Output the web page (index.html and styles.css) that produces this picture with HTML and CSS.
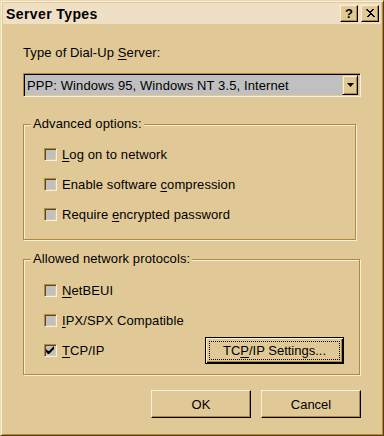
FILE: index.html
```html
<!DOCTYPE html>
<html>
  <head>
    <meta charset="utf-8">
    <title>Server Types</title>
    <link rel="stylesheet" href="styles.css">
  </head>

  <body>
    <div class="window">
      <div class="titlebar">
        <span class="title">Server Types</span>
        <div class="title-buttons">
          <button class="tbtn help">?</button>
          <button class="tbtn close">
            <svg width="10" height="9" viewBox="0 0 10 9">
              <path d="M1 0h2v1h1v1h2v-1h1v-1h2v1h-1v1h-1v1h-1v1h1v1h1v1h1v1h1v1h-2v-1h-1v-1h-2v1h-1v1h-2v-1h1v-1h1v-1h1v-1h-1v-1h-1v-1h-1z" fill="#000"/>
            </svg>
          </button>
        </div>
      </div>

      <div class="content">
        <div class="field-label">Type of Dial-Up <u>S</u>erver:</div>
        <div class="combo">
          <span class="combo-text">PPP: Windows 95, Windows NT 3.5, Internet</span>
          <span class="combo-btn">
            <svg width="7" height="4" viewBox="0 0 7 4"><path d="M0 0h7l-3.5 4z" fill="#000"/></svg>
          </span>
        </div>

        <fieldset class="group group-advanced">
          <legend>Advanced options:</legend>
          <div class="check-row">
            <span class="box"></span>
            <span><u>L</u>og on to network</span>
          </div>
          <div class="check-row">
            <span class="box"></span>
            <span>Enable software <u>c</u>ompression</span>
          </div>
          <div class="check-row">
            <span class="box"></span>
            <span>Require <u>e</u>ncrypted password</span>
          </div>
        </fieldset>

        <fieldset class="group group-protocols">
          <legend>Allowed network protocols:</legend>
          <div class="check-row">
            <span class="box"></span>
            <span><u>N</u>etBEUI</span>
          </div>
          <div class="check-row">
            <span class="box"></span>
            <span><u>I</u>PX/SPX Compatible</span>
          </div>
          <div class="check-row">
            <span class="box">
              <svg width="9" height="9" viewBox="0 0 9 9"><path d="M0 3v3l2 2h1l5-5v-3l-5 5h-1z" fill="#000"/></svg>
            </span>
            <span><u>T</u>CP/IP</span>
            <button class="btn default">TC<u>P</u>/IP Settings...</button>
          </div>
        </fieldset>

        <div class="actions">
          <button class="btn">OK</button>
          <button class="btn">Cancel</button>
        </div>
      </div>
    </div>
  </body>
</html>
```

FILE: styles.css
```css
body {
  margin: 0;
  background-color: #e1c997;
  font-family: "Liberation Sans", Arial, sans-serif;
  font-size: 13px;
  letter-spacing: 0.1px;
  color: #000;
}

u {
  text-decoration-thickness: 1px;
  text-underline-offset: 2px;
}

.window {
  width: 384px;
  height: 436px;
  box-sizing: border-box;
  padding: 3px;
  background-color: #e1c997;
  border-top: 1px solid #ecd9ae;
  border-left: 1px solid #ecd9ae;
  border-right: 1px solid #5a3c10;
  border-bottom: 1px solid #5a3c10;
  box-shadow: inset 1px 1px 0 #f8efdc, inset -1px -1px 0 #b08840;
  display: flex;
  flex-direction: column;
}

.window .titlebar {
  margin: -1px -1px 0 -1px;
}

.titlebar {
  height: 21px;
  background-color: #efdfc5;
  display: flex;
  align-items: center;
  justify-content: space-between;
  padding-left: 3px;
}

.title {
  font-weight: bold;
  font-size: 14px;
  letter-spacing: 0.4px;
}

.title-buttons {
  display: flex;
  gap: 3px;
  margin-right: 2px;
}

.tbtn {
  width: 18px;
  height: 17px;
  padding: 0;
  box-sizing: border-box;
  background-color: #e1c997;
  border: 1px solid;
  border-color: #f8efdc #000 #000 #f8efdc;
  box-shadow: inset -1px -1px 0 #b08840;
  font-family: "Liberation Sans", Arial, sans-serif;
  font-weight: bold;
  font-size: 13px;
  line-height: 14px;
  display: flex;
  align-items: center;
  justify-content: center;
}

.tbtn svg {
  display: block;
}

.content {
  flex: 1;
  padding: 0 19px 0 19px;
  display: flex;
  flex-direction: column;
}

.field-label {
  margin-top: 21px;
  line-height: 16px;
}

.combo {
  margin-top: 12px;
  height: 24px;
  box-sizing: border-box;
  background-color: #c0c0c0;
  border: 1px solid;
  border-color: #b08840 #f8efdc #f8efdc #b08840;
  box-shadow: inset 1px 1px 0 #000, inset -1px -1px 0 #e1c997;
  display: flex;
  align-items: center;
  padding: 1px 2px 1px 3px;
}

.combo-text {
  flex: 1;
  font-size: 13px;
}

.combo-btn {
  width: 16px;
  height: 20px;
  box-sizing: border-box;
  background-color: #e1c997;
  border: 1px solid;
  border-color: #e1c997 #000 #000 #e1c997;
  box-shadow: inset 1px 1px 0 #f8efdc, inset -1px -1px 0 #b08840;
  display: flex;
  align-items: center;
  justify-content: center;
}

.group {
  margin: 0;
  padding: 0 15px 0 20px;
  border: 1px solid #b08840;
  box-shadow: inset 1px 1px 0 #f8efdc, 1px 1px 0 #f8efdc;
  min-width: 0;
}

.group legend {
  padding: 0 2px;
  margin-left: -13px;
  line-height: 16px;
  background-color: #e1c997;
}

.group-advanced {
  margin-top: 19px;
  margin-right: 5px;
  padding-top: 14px;
  padding-bottom: 16px;
  display: flex;
  flex-direction: column;
  gap: 13px;
}

.group-protocols {
  margin-top: 11px;
  margin-right: 1px;
  padding-top: 15px;
  padding-bottom: 15px;
  display: flex;
  flex-direction: column;
  gap: 13px;
}

.check-row {
  height: 17px;
  display: flex;
  align-items: center;
  gap: 5px;
}

.box {
  width: 13px;
  height: 13px;
  box-sizing: border-box;
  background-color: #c0c0c0;
  border: 1px solid;
  border-color: #b08840 #f8efdc #f8efdc #b08840;
  box-shadow: inset 1px 1px 0 #604818, inset -1px -1px 0 #e1c997;
  display: flex;
  align-items: center;
  justify-content: center;
}

.box svg {
  display: block;
}

.btn {
  width: 100px;
  height: 28px;
  box-sizing: border-box;
  padding: 0;
  background-color: #e1c997;
  border: 1px solid;
  border-color: #f8efdc #000 #000 #f8efdc;
  box-shadow: inset -1px -1px 0 #b08840;
  font-family: "Liberation Sans", Arial, sans-serif;
  font-size: 13px;
  color: #000;
}

.btn.default {
  width: 139px;
  height: 27px;
  margin: -5px 0 -5px auto;
  border-color: #000;
  box-shadow: inset 1px 1px 0 #f8efdc, inset -1px -1px 0 #000, inset -2px -2px 0 #b08840;
  outline: 1px dotted #000;
  outline-offset: -5px;
}

.actions {
  margin-top: 15px;
  display: flex;
  justify-content: flex-end;
  gap: 10px;
}
```
